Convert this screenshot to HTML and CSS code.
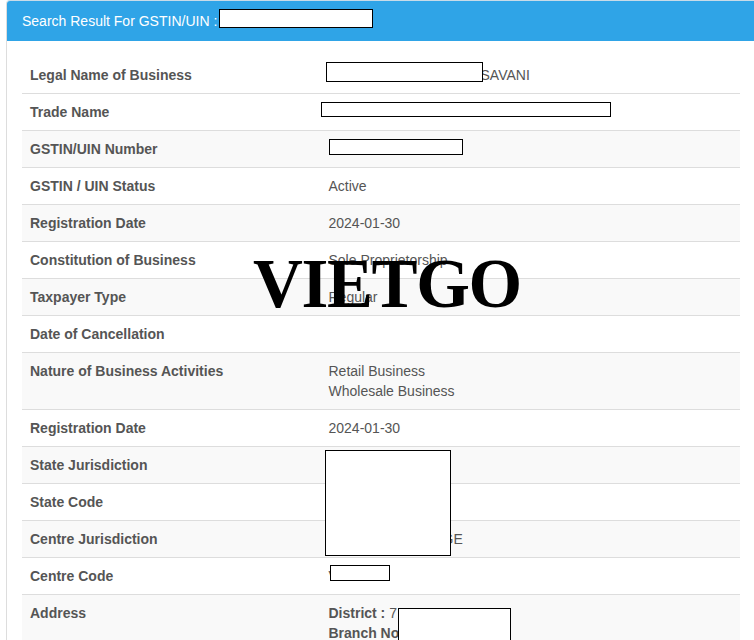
FILE: index.html
```html
<!DOCTYPE html>
<html lang="en">
<head>
<meta charset="utf-8">
<title>Search Result</title>
<link rel="stylesheet" href="styles.css">
</head>
<body>
<main class="panel">
  <h1 class="panel-heading">Search Result For GSTIN/UIN :</h1>
  <div class="panel-body">
    <table class="details">
      <thead>
        <tr><th>Legal Name of Business</th><td><span class="gap-legal"></span>SAVANI</td></tr>
      </thead>
      <tbody>
        <tr><th>Trade Name</th><td></td></tr>
        <tr><th>GSTIN/UIN Number</th><td></td></tr>
        <tr><th>GSTIN / UIN Status</th><td>Active</td></tr>
        <tr><th>Registration Date</th><td>2024-01-30</td></tr>
        <tr><th>Constitution of Business</th><td>Sole Proprietorship</td></tr>
        <tr><th>Taxpayer Type</th><td>Regular</td></tr>
        <tr><th>Date of Cancellation</th><td></td></tr>
        <tr><th>Nature of Business Activities</th><td>Retail Business<br>Wholesale Business</td></tr>
        <tr><th>Registration Date</th><td>2024-01-30</td></tr>
        <tr><th>State Jurisdiction</th><td></td></tr>
        <tr><th>State Code</th><td></td></tr>
        <tr><th>Centre Jurisdiction</th><td><span class="gap-centre"></span>GE</td></tr>
        <tr><th>Centre Code</th><td>V</td></tr>
        <tr><th>Address</th><td><strong>District :</strong> 7<br><strong>Branch No</strong></td></tr>
      </tbody>
    </table>
  </div>
</main>
<div class="redact r-search"></div>
<div class="redact r-legal"></div>
<div class="redact r-trade"></div>
<div class="redact r-gstin"></div>
<div class="redact r-juris"></div>
<div class="redact r-code"></div>
<div class="redact r-address"></div>
<div class="watermark">VIETGO</div>
</body>
</html>
```
FILE: styles.css
```css
html, body {
  margin: 0;
  height: 640px;
  overflow: hidden;
  background: #fff;
}
body {
  position: relative;
  padding: 0 0 0 6px;
  box-sizing: border-box;
  font-family: "Liberation Sans", Arial, sans-serif;
  font-size: 14px;
  line-height: 20px;
  color: #555;
}
.panel {
  width: 762px;
  border: 1px solid #ddd;
  border-top-color: #c8dbe8;
  border-radius: 4px 4px 0 0;
  box-sizing: border-box;
}
.panel-heading {
  margin: 0;
  padding: 10px 15px;
  font-size: 14px;
  font-weight: 400;
  line-height: 20px;
  color: #fff;
  background: #2fa4e7;
  border-radius: 3px 3px 0 0;
}
.panel-body {
  padding: 16px 0 0 15px;
}
.details {
  width: 718px;
  border-collapse: collapse;
  table-layout: fixed;
}
.details th,
.details td {
  box-sizing: border-box;
  padding: 8px;
  text-align: left;
  vertical-align: top;
  border-bottom: 1px solid #ddd;
}
.details th {
  width: 298.5px;
  font-weight: 700;
}
.details tbody tr:nth-child(even) {
  background: #f9f9f9;
}
.gap-legal {
  display: inline-block;
  width: 152px;
}
.gap-centre {
  display: inline-block;
  width: 114px;
}
.redact {
  position: absolute;
  box-sizing: border-box;
  background: #fff;
  border: 1px solid #000;
}
.r-search { left: 219px; top: 9px; width: 154px; height: 19px; }
.r-legal { left: 326px; top: 62px; width: 157px; height: 20px; }
.r-trade { left: 321px; top: 102px; width: 290px; height: 15px; }
.r-gstin { left: 329px; top: 139px; width: 134px; height: 16px; }
.r-juris { left: 325px; top: 450px; width: 126px; height: 106px; }
.r-code { left: 330px; top: 565px; width: 60px; height: 16px; }
.r-address { left: 398px; top: 608px; width: 113px; height: 33px; }
.watermark {
  position: absolute;
  left: 253px;
  top: 244px;
  font-family: "Liberation Serif", "Times New Roman", serif;
  font-size: 69px;
  font-weight: 700;
  letter-spacing: -1.4px;
  line-height: 80px;
  color: #000;
  white-space: nowrap;
}
```
